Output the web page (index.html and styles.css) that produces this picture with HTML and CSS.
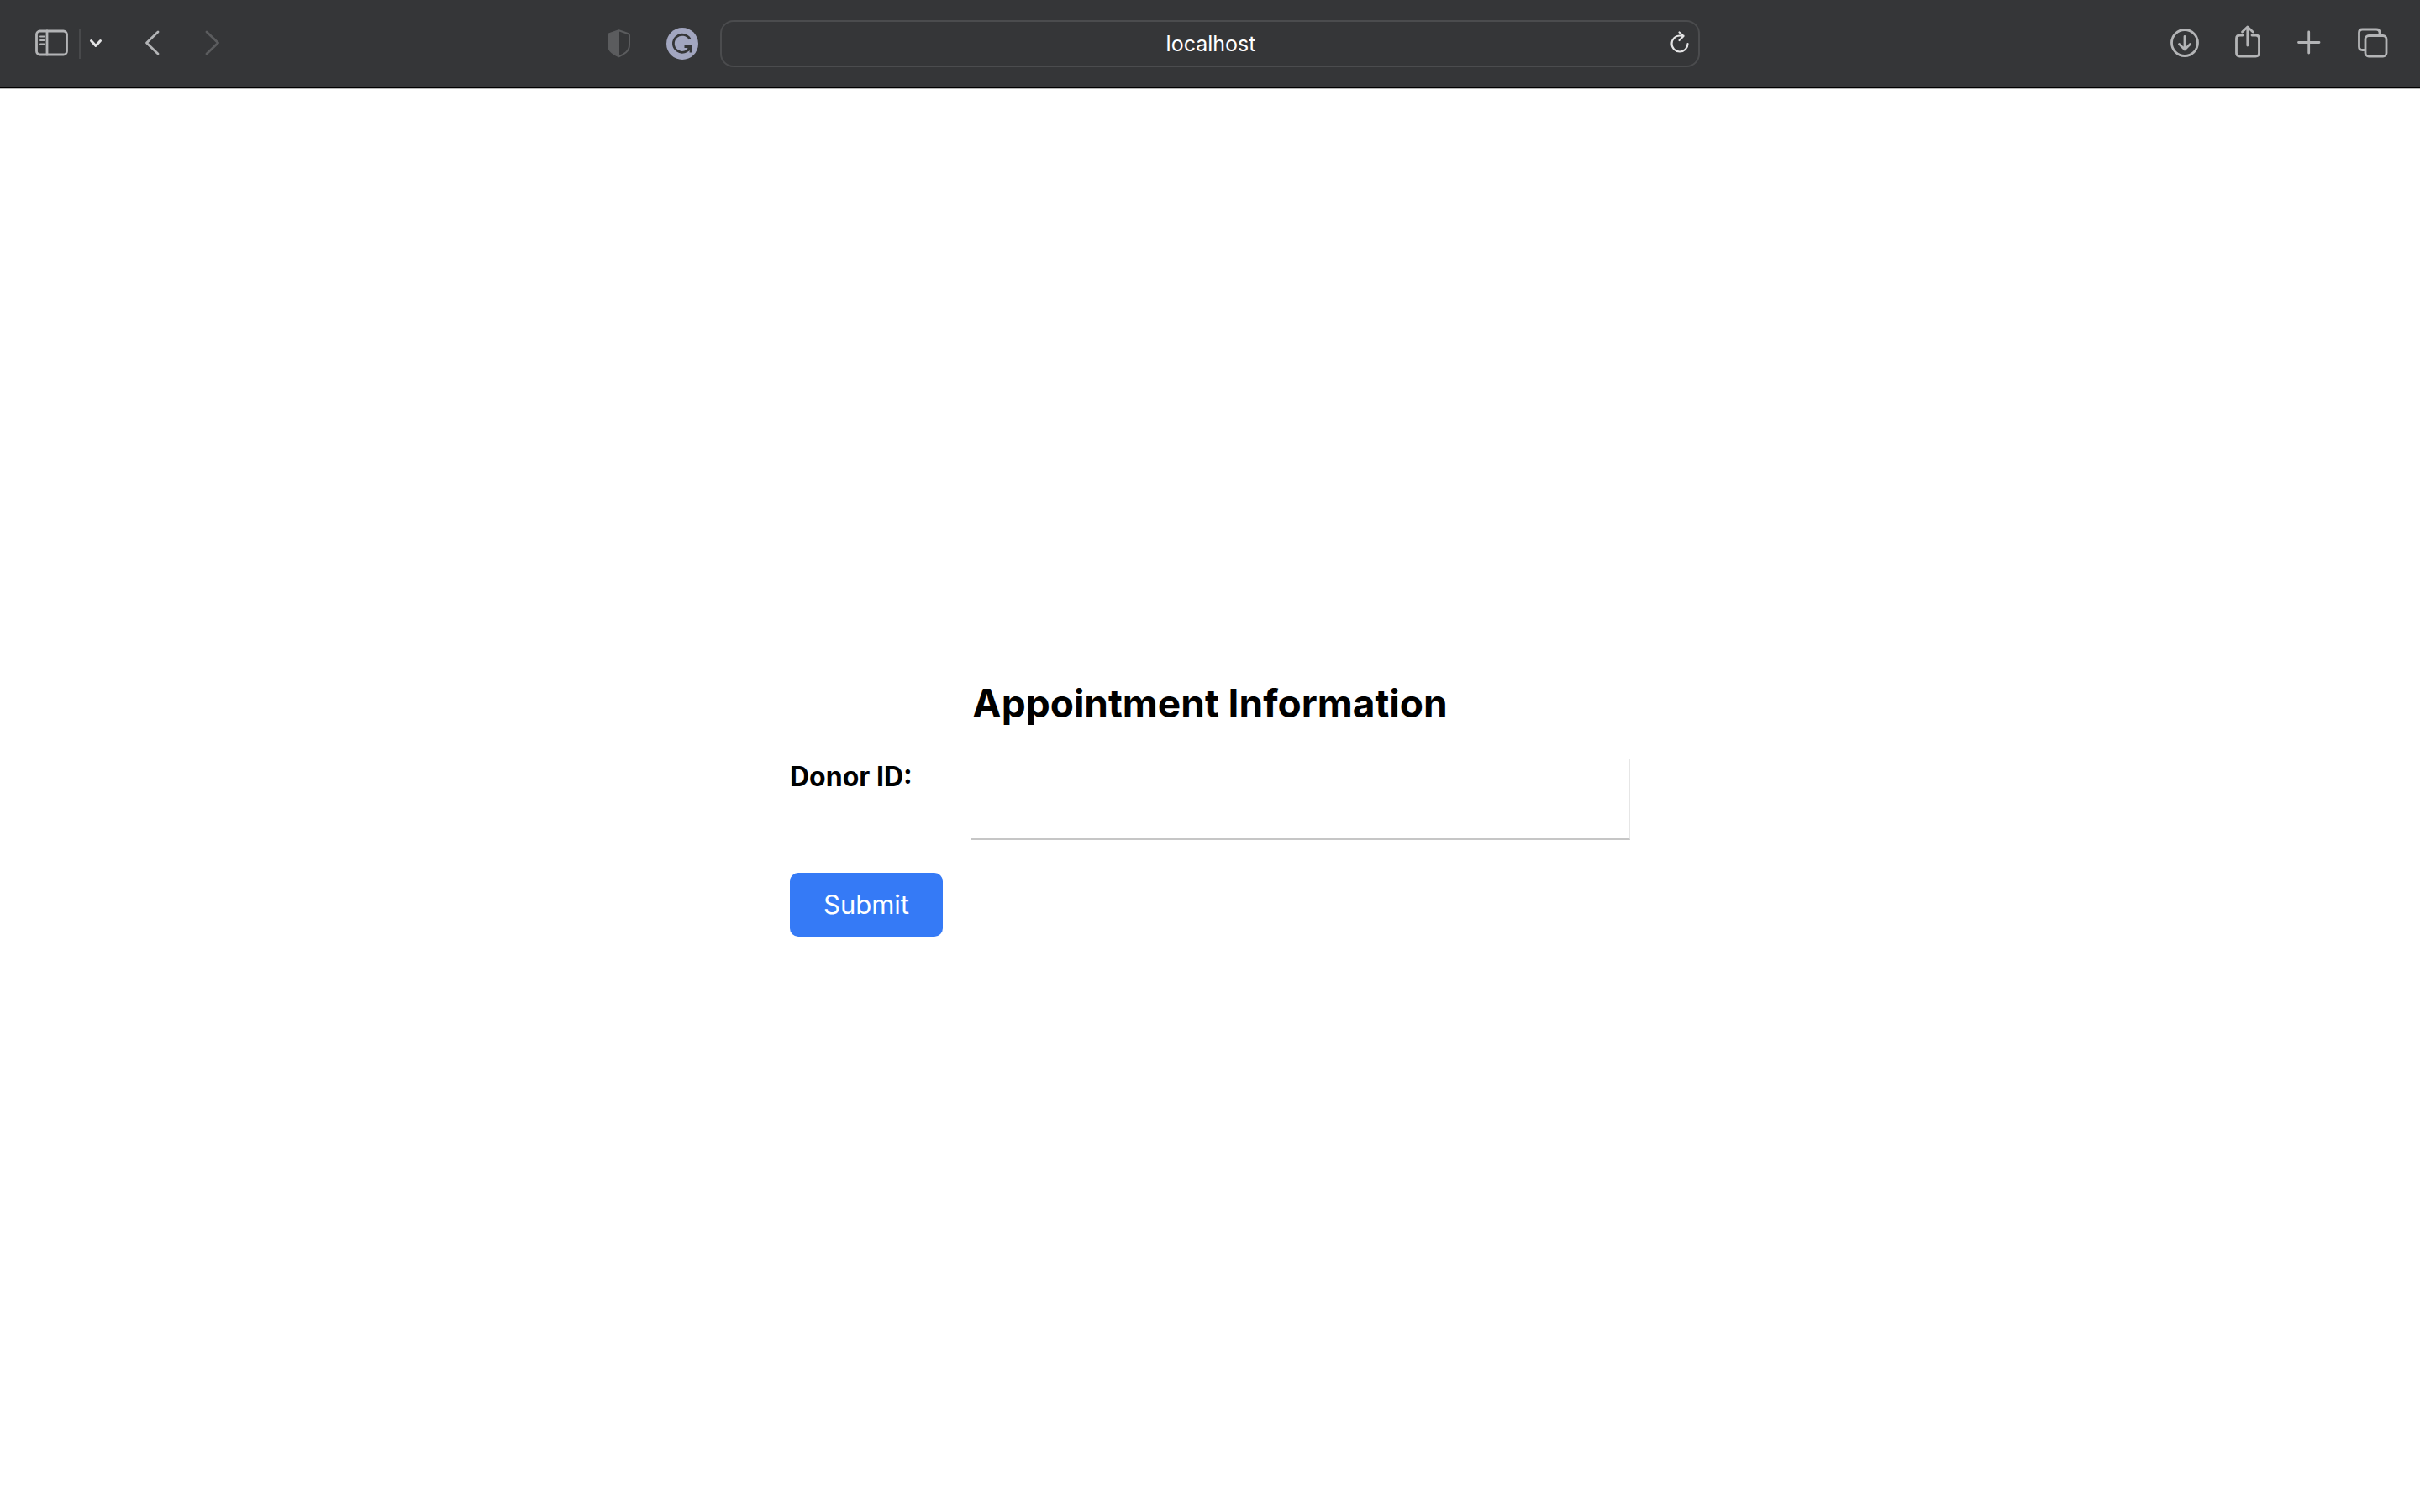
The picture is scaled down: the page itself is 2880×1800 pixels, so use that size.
FILE: index.html
```html
<!DOCTYPE html>
<html lang="en">
<head>
<meta charset="utf-8">
<meta name="viewport" content="width=device-width, initial-scale=1">
<title>Appointment Information</title>
<link rel="stylesheet" href="styles.css">
</head>
<body>
<header class="toolbar">
  <div class="toolbar-side">
    <div class="group sidebar-group">
      <button class="tool" type="button" aria-label="Show sidebar">
        <svg class="icon" viewBox="0 0 48 48"><rect x="5.500" y="9" width="36" height="28" rx="4"/><path d="M18 9v28"/><path class="thin" d="M10 15.500h4.500M10 20h4.500M10 24.500h4.500"/></svg>
      </button>
      <span class="divider"></span>
      <button class="tool" type="button" aria-label="Tab groups">
        <svg class="icon-small bright" viewBox="0 0 20 48"><path d="M4.500 20.500l5.500 6 5.500-6"/></svg>
      </button>
    </div>
    <div class="group nav-group">
      <button class="tool" type="button" aria-label="Back">
        <svg class="icon" viewBox="0 0 48 48"><path d="M32 10L18.500 23 32 36"/></svg>
      </button>
      <button class="tool" type="button" aria-label="Forward" disabled>
        <svg class="icon dim" viewBox="0 0 48 48"><path d="M18 10l13.500 13L18 36"/></svg>
      </button>
    </div>
    <div class="group extension-group">
      <button class="tool" type="button" aria-label="Privacy report">
        <svg class="icon dim" viewBox="0 0 48 48"><path class="thin" d="M22.500 8.200L34 12.200Q35 12.600 35 14V25Q35 31 31 34.200Q27 37.400 22.500 39.200Q18 37.400 14 34.200Q10 31 10 25V14Q10 12.600 11 12.200Z"/><path class="fill" d="M23 8L11 12.200Q10 12.600 10 14V25Q10 31 14 34.200Q18 37.400 23 39.200Z"/></svg>
      </button>
      <button class="tool" type="button" aria-label="Grammarly">
        <svg class="icon grammar" viewBox="0 0 48 48"><circle class="disc" cx="24" cy="24" r="19"/><path d="M33 18.500A10.500 10.500 0 1 0 33.500 28"/><path d="M26.500 27.500h7.500v7M33.500 28l-3.500 4"/></svg>
      </button>
    </div>
  </div>
  <div class="address">
    <input class="address-input" type="text" value="localhost" aria-label="Address">
    <button class="tool" type="button" aria-label="Reload">
      <svg class="icon bright" viewBox="0 0 48 48"><path d="M35.500 24A9.500 9.500 0 1 1 26 14.500h4.500M25.500 10.500l5 4.500-5 5"/></svg>
    </button>
  </div>
  <div class="toolbar-side actions">
    <button class="tool" type="button" aria-label="Downloads">
      <svg class="icon" viewBox="0 0 48 48"><circle cx="22" cy="23" r="15.500"/><path d="M22 15.500v15M15.500 24.500l6.500 6.500 6.500-6.500"/></svg>
    </button>
    <button class="tool" type="button" aria-label="Share">
      <svg class="icon" viewBox="0 0 48 48"><path d="M17 14h-3Q9.500 14 9.500 18V35Q9.500 39 13.500 39H32.500Q36.500 39 36.500 35V18Q36.500 14 32.500 14H28M22.800 26V4.500M16.500 10l6.300-6 6.300 6"/></svg>
    </button>
    <button class="tool" type="button" aria-label="New tab">
      <svg class="icon" viewBox="0 0 48 48"><path d="M9.500 22.500h24.500M21.700 10v25"/></svg>
    </button>
    <button class="tool" type="button" aria-label="Show all tabs">
      <svg class="icon" viewBox="0 0 48 48"><path d="M14 31.500h-2.500Q7.500 31.500 7.500 27.500V11Q7.500 7 11.500 7H28Q32 7 32 11v2.500"/><rect x="15" y="14.500" width="25" height="24.500" rx="4"/></svg>
    </button>
  </div>
</header>
<main class="page">
  <form class="form">
    <h1 class="title">Appointment Information</h1>
    <div class="field">
      <label class="label" for="donor-id">Donor ID:</label>
      <input class="text-input" id="donor-id" name="donorId" type="text">
    </div>
    <button class="submit" type="button">Submit</button>
  </form>
</main>
</body>
</html>
```
FILE: styles.css
```css
* {
  box-sizing: border-box;
}

body {
  display: flex;
  flex-direction: column;
  min-height: 100vh;
  margin: 0;
  background: #fff;
  color: #000;
  font-family: Inter, "Liberation Sans", sans-serif;
}

button,
input {
  margin: 0;
  font-family: inherit;
}

.toolbar {
  display: grid;
  grid-template-columns: 1fr minmax(0, 1166px) 1fr;
  column-gap: 21px;
  align-items: center;
  height: 106px;
  padding: 0 38px 1px;
  border-bottom: 1px solid #b8b8b8;
  background: #353638;
  box-shadow: inset 0 -1px #000;
}

.toolbar-side,
.group {
  display: flex;
  align-items: center;
}

.sidebar-group {
  gap: 8px;
}

.nav-group {
  gap: 24px;
  margin-left: 32px;
}

.extension-group {
  gap: 26px;
  margin-left: auto;
}

.actions {
  justify-content: flex-end;
  gap: 26px;
  margin-right: -6px;
}

.divider {
  width: 2px;
  height: 36px;
  background: #48494b;
}

.tool {
  display: block;
  padding: 0;
  border: 0;
  background: none;
}

.icon,
.icon-small {
  display: block;
  width: 48px;
  height: 48px;
  fill: none;
  stroke: #b3b4b6;
  stroke-width: 2.8;
  stroke-linecap: round;
  stroke-linejoin: round;
}

.icon-small {
  width: 20px;
}

.icon .thin {
  stroke-width: 2;
}

.icon.dim {
  stroke: #5b5c5e;
}

.icon.dim .fill {
  fill: #5b5c5e;
  stroke: none;
}

.icon.bright,
.icon-small.bright {
  stroke: #e4e4e5;
}

.icon.bright {
  stroke-width: 2.2;
}

.icon-small.bright {
  stroke-width: 3;
}

.icon.grammar {
  stroke: #353638;
  stroke-linecap: butt;
  stroke-linejoin: miter;
}

.icon .disc {
  fill: #a2a6c0;
  stroke: none;
}

.address {
  display: grid;
  grid-template-columns: 1fr 48px;
  align-items: center;
  height: 56px;
  padding-left: 50px;
  border: 2px solid #4b4c4e;
  border-radius: 16px;
}

.address-input {
  min-width: 0;
  padding: 0;
  border: 0;
  outline: 0;
  background: none;
  color: #fff;
  font-size: 25px;
  line-height: 32px;
  text-align: center;
}

.page {
  display: flex;
  flex: 1;
  flex-direction: column;
  align-items: center;
  justify-content: center;
  padding: 40px 24px 24px;
}

.form {
  width: 100%;
  max-width: 1000px;
}

.title {
  margin: 0 0 36px;
  font-size: 46px;
  font-weight: 700;
  line-height: 60px;
  text-align: center;
}

.field {
  display: grid;
  grid-template-columns: 215px 1fr;
  align-items: start;
  margin-bottom: 39px;
}

.label {
  font-size: 32px;
  font-weight: 700;
  line-height: 44px;
}

.text-input {
  width: 100%;
  height: 97px;
  padding: 16px;
  border: 1px solid #e6e6e6;
  border-bottom: 2px solid #c6c6c6;
  border-radius: 0;
  outline: 0;
  background: #fff;
  font-size: 32px;
}

.submit {
  height: 76px;
  padding: 0 40px;
  border: 0;
  border-radius: 10px;
  background: #357af6;
  color: #fff;
  font-size: 31px;
  line-height: 40px;
}
```
